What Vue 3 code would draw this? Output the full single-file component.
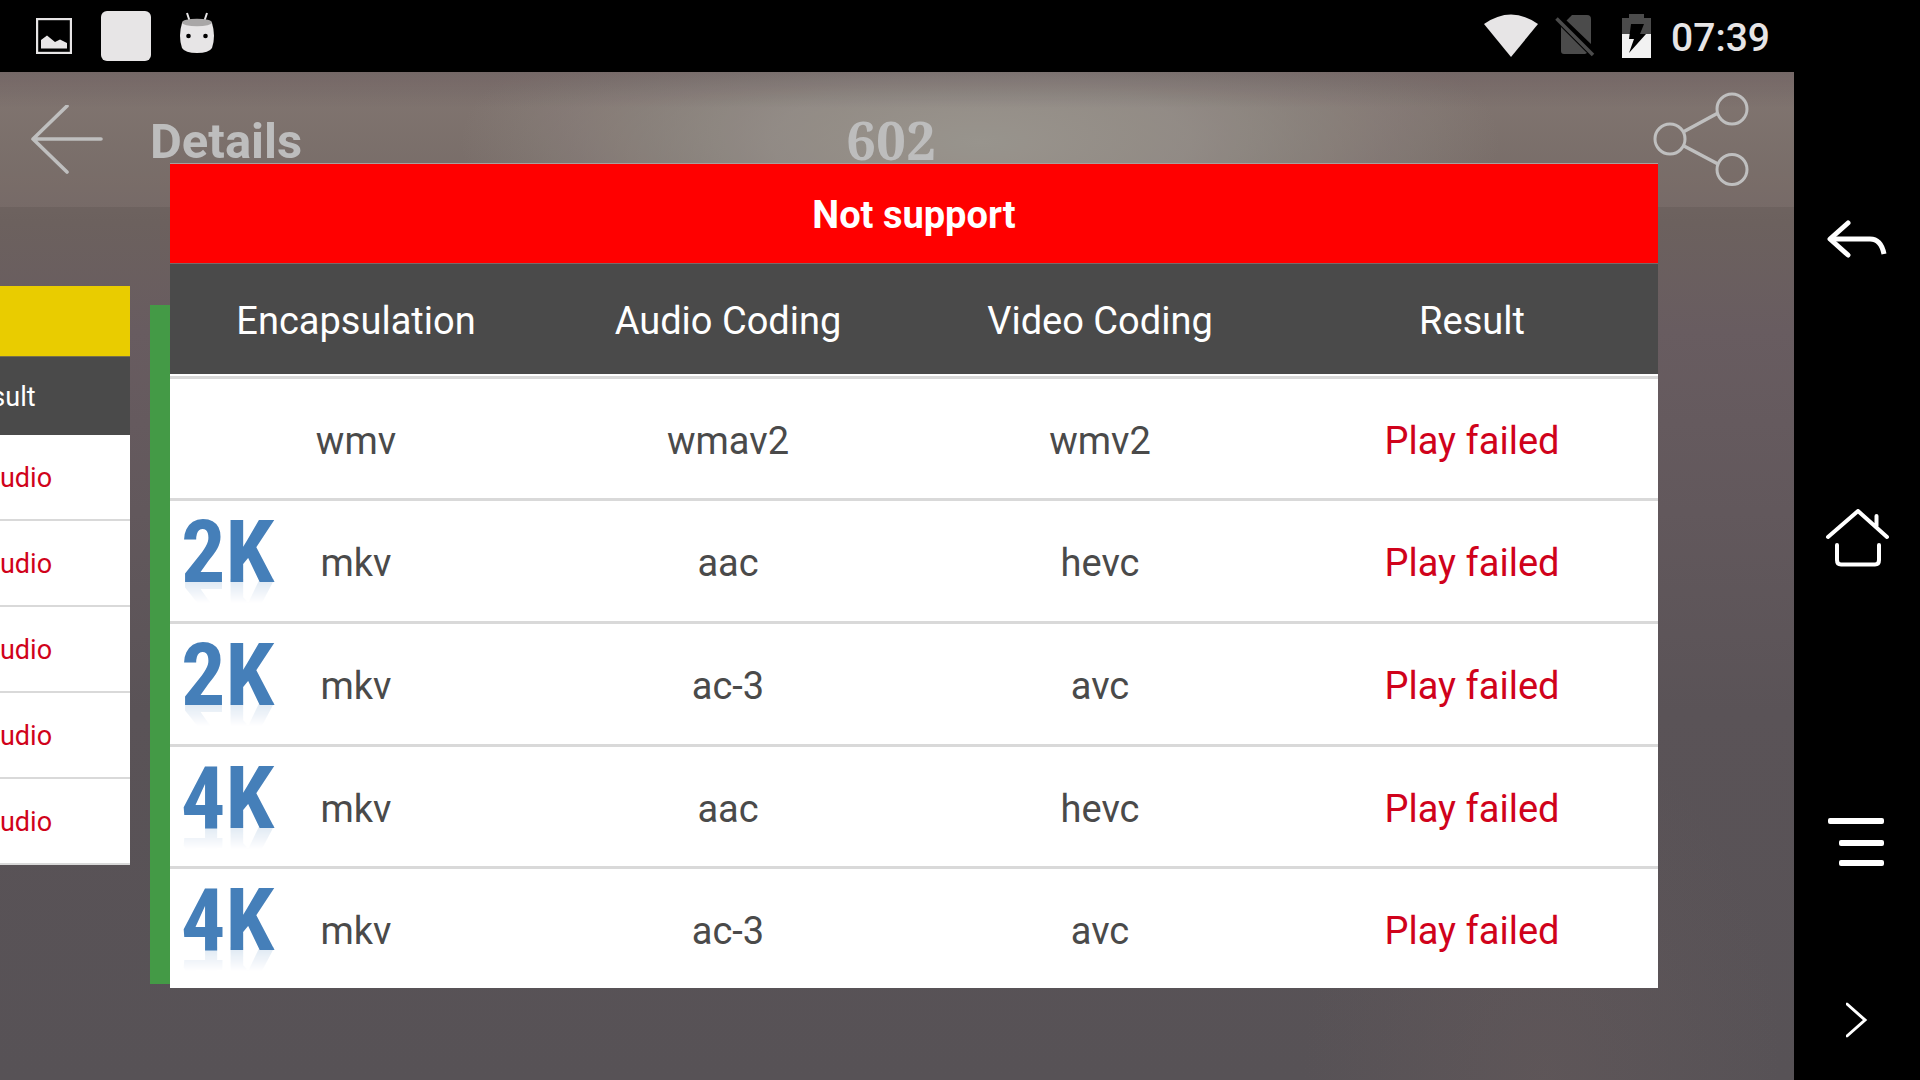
<script setup>
const columns = ['Encapsulation', 'Audio Coding', 'Video Coding', 'Result']

const rows = [
  { badge: '', cells: ['wmv', 'wmav2', 'wmv2'] },
  { badge: '2K', cells: ['mkv', 'aac', 'hevc'] },
  { badge: '2K', cells: ['mkv', 'ac-3', 'avc'] },
  { badge: '4K', cells: ['mkv', 'aac', 'hevc'] },
  { badge: '4K', cells: ['mkv', 'ac-3', 'avc'] },
]
</script>

<template>
  <div class="device">
    <div class="screen">
      <header class="status">
        <div class="status-group left">
          <svg width="36" height="36" viewBox="0 0 36 36" fill="none">
            <rect x="1" y="1" width="34" height="34" stroke="#e7e5e6" stroke-width="2.4" />
            <path d="M5 30.500V22L11 17.500L19 24L24 21.500L31 25V30.500Z" fill="#e7e5e6" />
          </svg>
          <span class="blank-app"></span>
          <svg class="android" width="34" height="42" viewBox="0 0 34 42">
            <path d="M7 1L10 10M27 1L24 10" stroke="#e7e5e6" stroke-width="2" />
            <path d="M2 11Q17 3 32 11Q36 24 32 36Q29 41 17 41Q5 41 2 36Q-2 24 2 11Z" fill="#e7e5e6" />
            <ellipse cx="17" cy="10.500" rx="15" ry="3.800" fill="#a9a7a7" />
            <circle cx="8.500" cy="24" r="2.300" fill="#000" />
            <circle cx="25.500" cy="24" r="2.300" fill="#000" />
          </svg>
        </div>
        <div class="status-group right">
          <svg width="54" height="44" viewBox="0 0 54 44">
            <path d="M0 10Q27 -9 54 10L27 43Z" fill="#e7e5e6" />
          </svg>
          <svg class="sim" width="40" height="42" viewBox="0 0 40 42">
            <path d="M17 0H32Q36 0 36 4V29L11.500 5.500ZM6 12L32 38L30 39H9Q6 39 6 36Z" fill="#4b4b4b" />
            <path d="M1.500 3.500L38 40" stroke="#4b4b4b" stroke-width="3.600" />
          </svg>
          <svg class="battery" width="29" height="44" viewBox="0 0 29 44">
            <path d="M7 0H22V4H29V20H0V4H7Z" fill="#4b4b4b" />
            <path d="M0 20H29V44H0Z" fill="#f2f2f2" />
            <path d="M9 10H22L18 20H24L7 39L12 25H7Z" fill="#000" />
          </svg>
          <time class="clock">07:39</time>
        </div>
      </header>

      <main class="content">
        <div class="title-bar">
          <button class="icon-button" type="button" aria-label="Back">
            <svg width="72" height="70" viewBox="0 0 72 70" fill="none" stroke="#bfbfbf" stroke-width="3.600" stroke-linecap="round" stroke-linejoin="round">
              <path d="M36 1L2 34L36 67M2 34H70" />
            </svg>
          </button>
          <h1>Details</h1>
          <span class="score">602</span>
          <button class="icon-button share" type="button" aria-label="Share">
            <svg width="96" height="96" viewBox="0 0 96 96" fill="none" stroke="#bfbfbf" stroke-width="3">
              <circle cx="17" cy="47" r="15" />
              <circle cx="79" cy="17" r="15" />
              <circle cx="79" cy="77.500" r="15" />
              <path d="M31 39.500L65 21M31 54L65 72" stroke-width="3.600" />
            </svg>
          </button>
        </div>

        <div class="carousel">
          <section class="side-card">
            <div class="side-banner"></div>
            <table class="side-table">
              <thead>
                <tr><th>Result</th></tr>
              </thead>
              <tbody>
                <tr v-for="n in 5" :key="n"><td>No audio</td></tr>
              </tbody>
            </table>
          </section>
          <section class="green-card"></section>
        </div>
      </main>

      <section class="dialog" role="dialog" aria-labelledby="dialog-title">
        <h2 id="dialog-title">Not support</h2>
        <table class="codec-table">
          <thead>
            <tr>
              <th v-for="name in columns" :key="name" scope="col">{{ name }}</th>
            </tr>
          </thead>
          <tbody>
            <tr v-for="(row, i) in rows" :key="i">
              <td v-for="(cell, j) in row.cells" :key="j">
                <span v-if="j === 0 && row.badge" class="badge">{{ row.badge }}</span>
                {{ cell }}
              </td>
              <td class="failed">Play failed</td>
            </tr>
          </tbody>
        </table>
      </section>
    </div>

    <nav class="nav">
      <button type="button" aria-label="Back">
        <svg width="60" height="38" viewBox="0 0 60 38" fill="none" stroke="#fff" stroke-width="5" stroke-linecap="round" stroke-linejoin="round">
          <path d="M21 3L3 19L21 35M3 19" />
          <path d="M4 19H43Q54 19 57 34" stroke-linecap="butt" />
        </svg>
      </button>
      <button type="button" aria-label="Home">
        <svg width="64" height="58" viewBox="0 0 64 58" fill="none" stroke="#fff" stroke-width="4" stroke-linecap="round" stroke-linejoin="round">
          <path d="M3 28L33 2L62 28M51.500 17V7" />
          <path d="M12 36V51Q12 55.500 16 55.500H50Q54 55.500 54 51V36" />
        </svg>
      </button>
      <button type="button" aria-label="Menu">
        <svg width="58" height="50" viewBox="0 0 58 50" fill="#fff">
          <rect x="0" y="1" width="56" height="6" rx="2" />
          <rect x="11" y="23" width="45" height="6" rx="2" />
          <rect x="11" y="43" width="45" height="6" rx="2" />
        </svg>
      </button>
      <button type="button" aria-label="Next">
        <svg width="22" height="36" viewBox="0 0 22 36" fill="none" stroke="#fff" stroke-width="3" stroke-linecap="round">
          <path d="M1 2L19 18L1 34" />
        </svg>
      </button>
    </nav>
  </div>
</template>

<style>
body {
  background: #000;
}
</style>

<style scoped>
.device {
  display: grid;
  grid-template-columns: minmax(0, 1fr) 126px;
  min-height: 100vh;
  overflow: hidden;
  font-family: Roboto, 'Liberation Sans', sans-serif;
}

button {
  display: flex;
  align-items: center;
  justify-content: center;
  padding: 0;
  border: 0;
  background: none;
  cursor: pointer;
}

svg {
  display: block;
  flex: none;
}

.screen {
  position: relative;
  display: flex;
  flex-direction: column;
}

.status {
  display: flex;
  justify-content: space-between;
  height: 72px;
  padding: 0 24px 0 36px;
  background: #000;
}

.status-group {
  display: flex;
  align-items: center;
}

.left {
  gap: 29px;
}

.blank-app {
  width: 50px;
  height: 50px;
  border-radius: 6px;
  background: #e7e5e6;
}

.android {
  margin-bottom: 6px;
}

.sim {
  margin: 0 27px 0 17px;
}

.clock {
  margin-left: 20px;
  padding-top: 4px;
  color: #e7e5e6;
  font-size: 39px;
  font-weight: 500;
  line-height: 48px;
}

.content {
  flex: 1;
  background:
    linear-gradient(#5c4f5380, #5c4f5300 36px),
    radial-gradient(ellipse 520px 170px at 980px 70px, #928e88 0%, #928e88c0 40%, #928e8800 100%),
    radial-gradient(ellipse 240px 360px at 86% 100%, #6b5d5d58, #6b5d5d00),
    linear-gradient(#7a6e6a 0, #6c615e 150px, #685c60 260px, #62585c 440px, #5a5357 640px, #575256 100%);
}

.title-bar {
  position: relative;
  display: flex;
  align-items: center;
  height: 135px;
  padding: 0 45px 0 31px;
  background: #ffe8e010;
}

h1 {
  margin: 4px 0 0 47px;
  color: #bdbdbd;
  font-size: 49px;
  font-weight: 700;
  line-height: 60px;
}

.score {
  position: absolute;
  left: 0;
  right: 12px;
  top: 34px;
  color: #bdbdbd;
  font-family: 'Noto Serif', 'Liberation Serif', serif;
  font-size: 53px;
  font-weight: 700;
  line-height: 68px;
  text-align: center;
}

.share {
  margin-left: auto;
}

.carousel {
  display: flex;
  align-items: flex-start;
  gap: 20px;
  padding: 79px 136px 0 0;
}

.side-card {
  width: 264px;
  margin-left: -134px;
  background: #fff;
}

.side-banner {
  height: 70px;
  border-bottom: 1px solid #77704a;
  background: #e9cc00;
}

table {
  width: 100%;
  border-collapse: collapse;
  table-layout: fixed;
}

th,
td {
  padding: 0;
  font-weight: 400;
  text-align: center;
}

th {
  background: #4a4a4a;
  color: #fff;
}

.side-table {
  font-size: 27px;
  line-height: 32px;
}

.side-table th {
  height: 76px;
  padding-top: 2px;
}

.side-table td {
  height: 82px;
  padding-top: 2px;
  border-bottom: 2px solid #d9d9d9;
  color: #d0021b;
}

.green-card {
  flex: 1;
  height: 679px;
  margin-top: 19px;
  background: #449a46;
}

.dialog {
  position: absolute;
  top: 163px;
  left: 170px;
  right: 136px;
  height: 825px;
  overflow: hidden;
  border-top: 1px solid #a8a09c;
  box-sizing: border-box;
  background: #fff;
}

h2 {
  margin: 0;
  padding-top: 4px;
  border-bottom: 1px solid #7a6a6a;
  background: #ff0000;
  color: #fff;
  font-size: 38px;
  font-weight: 700;
  line-height: 95px;
  text-align: center;
}

.codec-table {
  font-size: 38px;
  line-height: 44px;
  border-collapse: separate;
  border-spacing: 0;
}

.codec-table th {
  height: 106px;
  padding-top: 4px;
  border-bottom: 2px solid #fff;
}

.codec-table td {
  position: relative;
  height: 116px;
  padding-top: 4px;
  border-top: 3px solid #d9d9d9;
  color: #4a4a4a;
}

.codec-table tr:nth-child(3n + 1) td {
  height: 115px;
}

.codec-table .failed {
  color: #d0021b;
}

.badge {
  position: absolute;
  left: 11px;
  top: 13px;
  color: #457fb9;
  font-family: 'Roboto Condensed', 'Liberation Sans Narrow', 'Open Sans Condensed', sans-serif;
  font-size: 88px;
  font-weight: 700;
  line-height: 76px;
  -webkit-box-reflect: below -19px linear-gradient(transparent 58%, #00000030 90%);
}

.nav {
  display: grid;
  grid-template-rows: 302fr 296fr 312fr 44fr;
  padding: 88px 0 38px;
  background: #000;
}
</style>
